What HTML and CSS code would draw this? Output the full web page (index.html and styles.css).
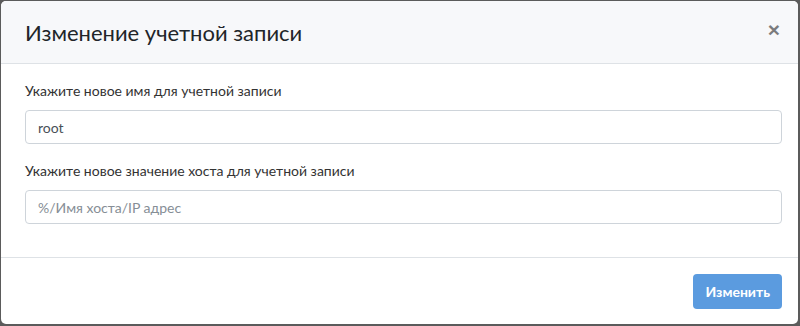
FILE: index.html
```html
<!DOCTYPE html>
<html lang="ru">
<head>
    <meta charset="UTF-8">
    <title>Изменение учетной записи</title>
    <link rel="stylesheet" href="styles.css">
</head>
<body>
    <!-- Модальное окно -->
    <div class="modal">
        <div class="modal-header">
            <h4 class="modal-title">Изменение учетной записи</h4>
            <button class="close" type="button">&times;</button>
        </div>

        <div class="modal-body">
            <div class="form-group">
                <label for="user-name">Укажите новое имя для учетной записи</label>
                <input class="form-control" id="user-name" type="text" value="root">
            </div>
            <div class="form-group">
                <label for="user-host">Укажите новое значение хоста для учетной записи</label>
                <input class="form-control" id="user-host" type="text" placeholder="%/Имя хоста/IP адрес">
            </div>
        </div>

        <div class="modal-footer">
            <button class="btn btn-primary" type="button" disabled>Изменить</button>
        </div>
    </div>
</body>
</html>
```

FILE: styles.css
```css
* {
    box-sizing: border-box;
}

html, body {
    height: 100%;
}

body {
    margin: 0;
    padding: 1px 2px 2px 1px;
    background: #5b5b5b;
    font-family: Lato, 'Noto Sans', sans-serif;
    font-size: 14px;
    color: #212529;
}

.modal {
    background: #FFFFFF;
    border-radius: 5px;
    height: 100%;
    overflow: hidden;
    display: flex;
    flex-direction: column;
}

.modal-header {
    background: #f7f8fa;
    border-bottom: 1px solid #dee2e6;
    height: 63px;
    display: flex;
    align-items: center;
    justify-content: space-between;
    padding: 0 16px 0 24px;
}

.modal-title {
    margin: 0;
    font-size: 22px;
    font-weight: 400;
    color: #212529;
}

.close {
    background: none;
    border: 0;
    padding: 0 2px 5px;
    font-family: 'Liberation Sans', sans-serif;
    font-size: 21px;
    font-weight: 700;
    color: #000;
    opacity: .5;
    cursor: pointer;
}

.modal-body {
    padding: 16px 16px 17px 24px;
    border-bottom: 1px solid #dee2e6;
}

.form-group {
    margin-bottom: 16px;
}

.form-group label {
    display: block;
    line-height: 21px;
    margin-bottom: 9px;
    color: #333;
}

.form-control {
    display: block;
    width: 100%;
    height: 34px;
    padding: 6px 12px;
    font-family: inherit;
    font-size: 14px;
    color: #495057;
    background: #FFFFFF;
    border: 1px solid #ced4da;
    border-radius: 4px;
}

.form-control::placeholder {
    color: #868e96;
}

.modal-footer {
    flex: 1;
    display: flex;
    justify-content: flex-end;
    align-items: flex-start;
    padding: 16px 16px 0;
}

.btn {
    height: 35px;
    padding: 0 11px;
    font-family: inherit;
    font-size: 14px;
    font-weight: 700;
    border: 1px solid transparent;
    border-radius: 4px;
}

.btn-primary {
    background: #5b9bdf;
    color: #FFFFFF;
}
```
